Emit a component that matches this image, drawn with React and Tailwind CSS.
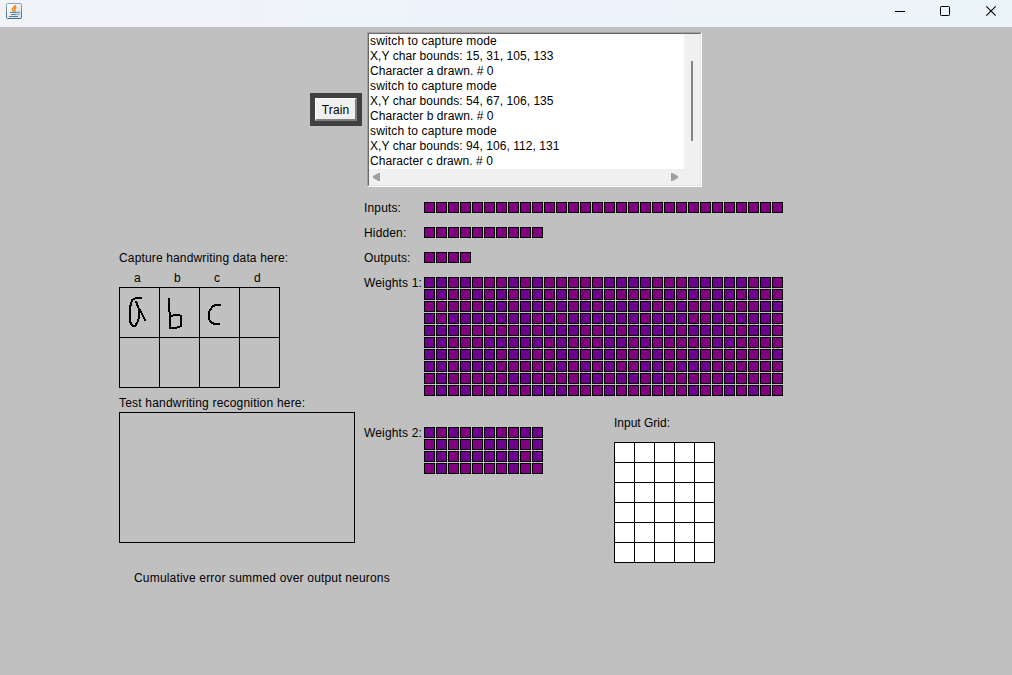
const LOG = [
  'switch to capture mode',
  'X,Y char bounds: 15, 31, 105, 133',
  'Character a drawn. # 0',
  'switch to capture mode',
  'X,Y char bounds: 54, 67, 106, 135',
  'Character b drawn. # 0',
  'switch to capture mode',
  'X,Y char bounds: 94, 106, 112, 131',
  'Character c drawn. # 0',
];

const logTracking = (line) => {
  if (line.startsWith('switch')) return 'tracking-[0.16px]';
  if (line.startsWith('X,Y')) return 'tracking-[0.05px]';
  return 'tracking-[0.07px]';
};

// V = negative (violet) weight, M = neutral (magenta) weight
const WEIGHTS_1 = [
  'VVMVMMMVMVMMMMM' + 'VVVVMMMVVVVVMVM',
  'VVMMVMVMVVMVMMV' + 'MMMMMVMVMVVMVMM',
  'MMMMMVVMVVMVMVM' + 'VVVVMMVMMVMMMVV',
  'VMVVVVVVVMVMVVV' + 'VVVMVVVMMVMVVVM',
  'VVVMMMMMVMVVVMM' + 'VMVVVVMVVVMMVVM',
  'VVMMMVVVVVMVMMM' + 'VVMVMMMMMVVMMMM',
  'VVMVVVMVVMMVVMV' + 'VMMMVMMVMMMMMMV',
  'VVMVVVMMMMMVMVM' + 'VMMVVMVVVMMMMMM',
  'MVMMMMMVVMMMMVV' + 'MVVMVMMMMMVMMMM',
  'MVMVMMVMMVVVMMM' + 'VMMMMMMVMMVMVMM',
];

const WEIGHTS_2 = ['VMVMVVMMVV', 'MVMVMVVVMV', 'VVMVVVVVMV', 'MVMMMMMVMM'];

function Cells({ rows }) {
  return (
    <div className="flex flex-col gap-px">
      {rows.map((row, y) => (
        <div key={y} className="flex gap-px">
          {[...row].map((c, x) => (
            <div
              key={x}
              className={`size-[11px] border border-black ${c === 'V' ? 'bg-[#6e0090]' : 'bg-[#800080]'}`}
            />
          ))}
        </div>
      ))}
    </div>
  );
}

function Neurons({ label, rows, className = '' }) {
  return (
    <div className={`flex items-start ${className}`}>
      <div className="w-[60px] h-[11px] leading-[13px] whitespace-nowrap tracking-[0.15px]">{label}</div>
      <Cells rows={rows} />
    </div>
  );
}

function TitleBar() {
  return (
    <header className="flex h-[27px] shrink-0 items-start justify-between bg-linear-to-r from-[#f1f3f8] via-[#eef3fb] to-[#ebf4f7] pl-1.5">
      <svg className="mt-[3px]" width="16" height="16" viewBox="0 0 16 16" fill="none">
        <defs>
          <linearGradient id="tile" x1="0" y1="0" x2="0" y2="1">
            <stop offset="0" stopColor="#8fa3b3" />
            <stop offset="1" stopColor="#426986" />
          </linearGradient>
          <linearGradient id="tileFill" x1="0" y1="0" x2="1" y2="1">
            <stop offset="0" stopColor="#ffffff" />
            <stop offset="1" stopColor="#d3dde5" />
          </linearGradient>
        </defs>
        <rect x="0.5" y="0.5" width="15" height="15" rx="1" fill="url(#tileFill)" stroke="url(#tile)" />
        <path d="M9.500 2C9.500 4.200 6 4.500 6.300 6.500C6.500 7.500 7.500 7.700 7.500 8.700M10.500 4.500C8.500 5.500 8 6.300 9 7.200C9.500 7.800 9 8.300 8.500 8.800" stroke="#ef8123" strokeWidth="1.500" />
        <path d="M4 9.500H11M5 11.500H10.500M3 13.500H12" stroke="#4f7f9f" strokeWidth="1.200" />
        <path d="M11 9.300C14.500 8 14 11 11.500 11.500" stroke="#4f7f9f" />
      </svg>
      <svg className="mr-[15px] mt-[5px]" width="103" height="12" viewBox="0 0 103 12" fill="none" stroke="#000">
        <path d="M1 6.500H11" />
        <rect x="46.500" y="1.500" width="9" height="9" rx="0.800" />
        <path d="M92.300 1.300L101.700 10.700M101.700 1.300L92.300 10.700" strokeWidth="1.100" />
      </svg>
    </header>
  );
}

function LogArea() {
  return (
    <div className="h-[155px] w-[335px] border-t border-l border-r border-b border-t-[#a0a0a0] border-l-[#a0a0a0] border-r-white border-b-white">
      <div className="flex h-full flex-col border border-t-[#696969] border-l-[#696969] border-r-[#e3e3e3] border-b-[#e3e3e3] bg-[#f0f0f0]">
        <div className="flex">
          <div className="h-[135px] w-[315px] bg-white pl-px">
            {LOG.map((line, i) => (
              <div key={i} className={`h-[15px] whitespace-nowrap leading-[15px] ${logTracking(line)}`}>{line}</div>
            ))}
          </div>
          <div className="ml-[7px] mt-[27px] h-20 w-0.5 bg-[#858585]" />
        </div>
        <div className="flex h-4 w-[315px] items-center justify-between pl-1 pr-[6px]">
          <svg width="7" height="8" viewBox="0 0 7 8"><path d="M7 0V8H5.500L0 5V3L5.500 0Z" fill="#a0a0a0" /></svg>
          <svg width="7" height="8" viewBox="0 0 7 8"><path d="M0 0V8H1.500L7 5V3L1.500 0Z" fill="#a0a0a0" /></svg>
        </div>
      </div>
    </div>
  );
}

function CapturePanel() {
  return (
    <section className="w-[245px] pt-[63px]">
      <div className="h-[15px] whitespace-nowrap leading-[17px] tracking-[0.15px]">Capture handwriting data here:</div>
      <div className="mt-[5px] flex h-[15px] leading-[17px]">
        {['a', 'b', 'c', 'd'].map((c) => (
          <div key={c} className="w-10 pl-[15px]">{c}</div>
        ))}
      </div>
      <div className="relative mt-0.5 grid w-[161px] grid-cols-4 border-t border-l border-black">
        {Array.from({ length: 8 }, (_, i) => (
          <div key={i} className="h-[50px] border-r border-b border-black" />
        ))}
        <svg className="absolute -left-px -top-px" width="161" height="101" viewBox="0 0 161 101" fill="none" stroke="#000" strokeWidth="2" shapeRendering="crispEdges">
          <path d="M23 11H17L13 13L12 17L11 20V34L12 37L14 39H16L18 36L20 31V22M17 14L19 20L23 27L24 29L26.500 34" />
          <path d="M49.500 11V20L51 27V41H57L62 39V29L60 28H55L51 30" />
          <path d="M102 18H96L93 20L90 25V32L92 35.500L96 37H101" />
        </svg>
      </div>
      <div className="mt-[7px] h-[15px] whitespace-nowrap leading-[17px] tracking-[0.2px]">Test handwriting recognition here:</div>
      <div className="mt-0.5 h-[131px] w-[236px] border border-black" />
      <div className="mt-[27px] h-[15px] whitespace-nowrap pl-[15px] leading-[17px] tracking-[0.18px]">
        Cumulative error summed over output neurons
      </div>
    </section>
  );
}

export default function App() {
  return (
    <div className="flex h-[675px] w-[1012px] flex-col overflow-hidden bg-[#c0c0c0] text-[12px] text-black [font-family:'Liberation_Sans',Arial,sans-serif]">
      <TitleBar />
      <div className="flex items-center gap-[5px] pl-[310px] pt-[5px]">
        <div className="bg-[#404040] p-[5px]">
          <button className="block h-[23px] w-[42px] border-t border-l border-r-2 border-b-2 border-t-white border-l-white border-r-[#808080] border-b-[#808080] bg-[#f0f0f0] pt-px leading-[20px] tracking-[0.1px]">
            Train
          </button>
        </div>
        <LogArea />
      </div>
      <div className="flex pl-[119px]">
        <CapturePanel />
        <section className="pt-[15px]">
          <Neurons label="Inputs:" rows={['M'.repeat(30)]} />
          <Neurons label="Hidden:" rows={['M'.repeat(10)]} className="mt-[14px]" />
          <Neurons label="Outputs:" rows={['MMMM']} className="mt-[14px]" />
          <Neurons label="Weights 1:" rows={WEIGHTS_1} className="mt-[14px]" />
          <div className="flex items-start pt-[19px]">
            <Neurons label="Weights 2:" rows={WEIGHTS_2} className="mt-3" />
            <div className="ml-[71px]">
              <div className="h-[15px] leading-[17px]">Input Grid:</div>
              <div className="mt-3 grid w-[101px] grid-cols-5 border-t border-l border-black bg-white">
                {Array.from({ length: 30 }, (_, i) => (
                  <div key={i} className="h-5 border-r border-b border-black" />
                ))}
              </div>
            </div>
          </div>
        </section>
      </div>
    </div>
  );
}
